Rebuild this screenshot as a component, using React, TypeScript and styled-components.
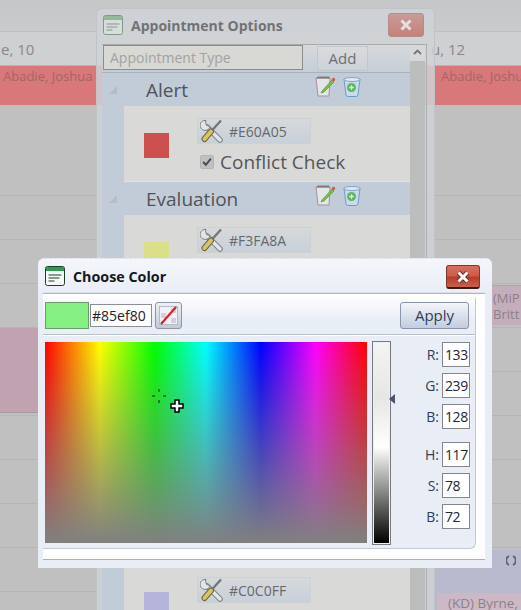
import styled, { createGlobalStyle } from "styled-components";

const GlobalStyle = createGlobalStyle`
    html, body {
        margin: 0;
        padding: 0;
        background: #c0c0c0;
    }
    * {
        box-sizing: border-box;
    }
`;

const Desktop = styled.div`
    position: relative;
    width: 521px;
    height: 610px;
    overflow: hidden;
    background: #c0c0c0;
    font-family: "Open Sans", "Noto Sans", sans-serif;
`;

/* the dimmed calendar behind the windows */
const TopBand = styled.div`
    height: 32px;
    background: linear-gradient(#c5c6c8, #cacbcd);
    border-bottom: 1px solid #bfc0c2;
`;
const DayRow = styled.div`
    display: grid;
    grid-template-columns: 96px 1fr 91px;
    height: 33px;
    align-items: center;
    font-size: 15px;
    color: #87888a;
    background: #cfd0d2;
`;
const DayCell = styled.div<{ $center?: boolean }>`
    padding-left: 1px;
    text-align: ${(p) => (p.$center ? "center" : "left")};
    padding-right: ${(p) => (p.$center ? "90px" : "0")};
`;
const AlertBar = styled.div`
    height: 40px;
    background: #d9787a;
    border-top: 1px solid #8fc6c4;
    display: flex;
    justify-content: space-between;
    font-size: 13px;
    color: #a26668;
    padding: 1px 0 0 3px;
    white-space: nowrap;
    overflow: hidden;
`;
const AlertName = styled.span<{ $right?: boolean }>`
    width: ${(p) => (p.$right ? "80px" : "auto")};
    overflow: hidden;
`;
const CalendarBody = styled.div`
    display: flex;
    justify-content: space-between;
    height: 505px;
    background: repeating-linear-gradient(#b5b5b5 0 1px, transparent 1px 44px) 0 90px / 100% 100% no-repeat;
`;
const LeftColumn = styled.div`
    width: 40px;
    padding-top: 223px;
`;
const PinkEvent = styled.div`
    height: 85px;
    background: #c0a2b0;
    border-bottom: 1px solid #a89aa0;
`;
const RightColumn = styled.div`
    width: 93px;
    display: flex;
    flex-direction: column;
    align-items: flex-end;
    justify-content: space-between;
    padding-top: 180px;
`;
const MipEvent = styled.div`
    width: 29px;
    height: 40px;
    overflow: hidden;
    background: #c5aebb;
    border-top: 1px solid #b0a5ac;
    color: #8d7f88;
    font-size: 13px;
    line-height: 16px;
    padding: 4px 0 0 1px;
    white-space: nowrap;
`;
const LilacEvent = styled.div`
    width: 93px;
    height: 60px;
    background: #b9bacd;
    display: flex;
    flex-direction: column;
    justify-content: flex-end;
    padding-left: 9px;
    position: relative;
`;
const ByrneEvent = styled.div`
    height: 17px;
    background: #cdb9c6;
    color: #8a8189;
    font-size: 13.5px;
    line-height: 20px;
    padding-left: 11px;
    white-space: nowrap;
    overflow: hidden;
`;
const SyncMark = styled.svg`
    position: absolute;
    right: 5px;
    top: 5px;
`;

/* dimmed options window */
const OptionsWindow = styled.div`
    position: absolute;
    left: 96px;
    top: 8px;
    width: 339px;
    height: 620px;
    border: 1px solid #c2c3c6;
    border-radius: 6px 6px 0 0;
    background: rgba(208, 211, 215, 0.82);
    padding: 0 7px 0 5px;
`;
const OptionsTitleBar = styled.div`
    display: flex;
    align-items: center;
    height: 36px;
    padding: 0 0 4px 1px;
    gap: 8px;
`;
const OptionsTitle = styled.div`
    flex: 1;
    font-size: 14px;
    font-weight: 700;
    color: #717275;
`;
const FadedClose = styled.div`
    width: 36px;
    height: 24px;
    margin-right: 3px;
    border: 1px solid #b98b87;
    border-radius: 3px;
    background: linear-gradient(#c99c98, #c5817a);
    display: flex;
    align-items: center;
    justify-content: center;
`;
const OptionsBody = styled.div`
    display: flex;
    border-right: 1px solid #aeafb1;
    box-shadow: 0 -1px 0 #a9aaac;
`;
const OptionsList = styled.div`
    width: 308px;
`;
const AddRow = styled.div`
    display: flex;
    align-items: flex-start;
    height: 28px;
    gap: 14px;
    background: linear-gradient(#d7d9db, #c5ced8);
    border-bottom: 1px solid #a8b2bd;
`;
const TypeInput = styled.div`
    width: 200px;
    height: 25px;
    margin-left: 1px;
    border: 1px solid #8b8c8c;
    background: #d8d8d4;
    color: #a1a2a2;
    font-size: 14px;
    line-height: 23px;
    padding-left: 6px;
`;
const AddButton = styled.div`
    width: 51px;
    height: 25px;
    margin-top: 1px;
    border: 1px solid #c2c7cd;
    background: linear-gradient(#d9dbdd, #cbd3da);
    color: #6e6f73;
    text-align: center;
    font-size: 15px;
    line-height: 23px;
`;
const GroupHeader = styled.div`
    display: flex;
    align-items: center;
    height: 33px;
    background: #c2ccd8;
    color: #515357;
    font-size: 19px;
`;
const Expander = styled.div`
    width: 44px;
    padding-left: 7px;
    display: flex;
`;
const GroupName = styled.div`
    flex: 1;
`;
const HeaderIcons = styled.div`
    display: flex;
    gap: 6px;
    margin: -6px 48px 0 0;
`;
const GroupBody = styled.div<{ $height: number }>`
    display: flex;
    height: ${(p) => p.$height}px;
    margin-left: 22px;
    background: #d9d9d7;
    border-bottom: 1px solid #e3e3e2;
    box-shadow: -22px 0 0 #c2ccd8;
`;
const SwatchArea = styled.div`
    width: 73px;
    padding: 27px 0 0 20px;
`;
const Swatch = styled.div<{ $color: string }>`
    width: 25px;
    height: 25px;
    background: ${(p) => p.$color};
`;
const GroupControls = styled.div`
    padding-top: 12px;
    display: flex;
    flex-direction: column;
    gap: 5px;
`;
const ColorButton = styled.div`
    display: flex;
    align-items: center;
    width: 114px;
    height: 26px;
    padding-left: 2px;
    gap: 6px;
    border: 1px solid #cdd1d5;
    background: linear-gradient(#d6d9dc, #c8d0d9);
    color: #66686c;
    font-size: 14px;
`;
const CheckRow = styled.div`
    display: flex;
    align-items: center;
    gap: 6px;
    padding-left: 3px;
    color: #55565a;
    font-size: 19px;
`;
const CheckBox = styled.div`
    width: 14px;
    height: 14px;
    border: 1px solid #b3b4b6;
    border-radius: 2px;
    background: #bfc0c2;
    display: flex;
    align-items: center;
    justify-content: center;
`;
const ScrollTrack = styled.div`
    width: 15px;
    height: 580px;
    background: linear-gradient(#d7d8d9 0 16px, #bcbebd 16px);
    color: #77787a;
    display: flex;
    justify-content: center;
    padding-top: 4px;
`;

/* colour dialog */
const ColorDialog = styled.div`
    position: absolute;
    left: 38px;
    top: 258px;
    width: 454px;
    height: 310px;
    display: flex;
    flex-direction: column;
    border-radius: 6px 6px 0 0;
    border-top: 1px dashed #dfe3ea;
    background: linear-gradient(#f4f6fb, #e9edf6 36px);
    padding: 0 7px 8px 5px;
`;
const DialogTitleBar = styled.div`
    display: flex;
    align-items: center;
    height: 34px;
    padding-left: 2px;
    gap: 8px;
`;
const DialogTitle = styled.div`
    flex: 1;
    font-size: 14.300px;
    font-weight: 700;
    color: #16181c;
`;
const CloseButton = styled.div`
    width: 34px;
    height: 24px;
    margin: 2px 5px 0 0;
    border: 1px solid #7c3a2c;
    border-bottom: 2px solid #2c2020;
    border-radius: 3px;
    background: linear-gradient(#d9705f 0, #cf5a47 48%, #b83c28 52%, #c9604c 100%);
    display: flex;
    align-items: center;
    justify-content: center;
`;
const OuterPanel = styled.div`
    flex: 1;
    background: #fff;
    border-top: 1px solid #aeb6c4;
    border-bottom: 1px solid #a8b0c0;
    box-shadow: 0 -1px 0 #dce1ea;
    padding: 0 9px 10px 0;
    display: flex;
`;
const InnerPanel = styled.div`
    flex: 1;
    background: #e9edf6;
    border-radius: 0 6px 6px 0;
    border-right: 1px solid #c3c9d6;
    border-bottom: 1px solid #c3c9d6;
    display: flex;
    flex-direction: column;
`;
const ColorToolbar = styled.div`
    display: flex;
    align-items: center;
    height: 41px;
    padding: 3px 6px 0 2px;
    border-bottom: 1px solid #b9c0cc;
    box-shadow: 0 1px 0 #fff;
    background: linear-gradient(#fff, #e9edf6 70%);
`;
const CurrentColor = styled.div`
    width: 44px;
    height: 27px;
    background: #85ef80;
    border: 1px solid #6c9c6c;
`;
const HexInput = styled.div`
    width: 62px;
    height: 23px;
    margin: 0 3px 0 1px;
    background: #fff;
    border: 1px solid #8d8f94;
    color: #222;
    font-size: 14px;
    line-height: 21px;
    padding-left: 1px;
`;
const NoColorButton = styled.div`
    width: 27px;
    height: 27px;
    border: 1px solid #8e96a6;
    border-radius: 3px;
    background: linear-gradient(#eef0f5, #c3cad8);
    display: flex;
    align-items: center;
    justify-content: center;
`;
const ApplyButton = styled.div`
    margin-left: auto;
    width: 69px;
    height: 27px;
    border: 1px solid #8a95ab;
    border-radius: 3px;
    background: linear-gradient(#f3f5f9, #c3cddf);
    color: #2f3e5c;
    font-size: 15px;
    line-height: 25px;
    text-align: center;
`;
const PickerRow = styled.div`
    display: flex;
    align-items: flex-start;
    padding: 6px 0 0 2px;
`;
const Spectrum = styled.div`
    position: relative;
    width: 322px;
    height: 201px;
    margin-top: 1px;
    background:
        linear-gradient(rgba(128, 128, 128, 0), #808080),
        linear-gradient(
            90deg,
            #ff0000 0%,
            #ffff00 17%,
            #00ff00 34%,
            #00ffff 50%,
            #0000ff 67%,
            #ff00ff 84%,
            #ff0000 100%
        );
`;
const CursorMark = styled.svg`
    position: absolute;
    left: 104px;
    top: 44px;
`;
const BrightnessWrap = styled.div`
    position: relative;
    margin-left: 5px;
`;
const BrightnessBar = styled.div`
    width: 19px;
    height: 204px;
    border: 2px solid #eef0f5;
    outline: 1px solid #77797e;
    outline-offset: -1px;
    background: linear-gradient(#f4f4f4, #e6e6e6 27%, #fff 52%, #000 100%);
`;
const LevelArrow = styled.div`
    position: absolute;
    left: 17px;
    top: 53px;
    width: 0;
    height: 0;
    border-top: 5px solid transparent;
    border-bottom: 5px solid transparent;
    border-right: 6px solid #4b5570;
`;
const ValueColumn = styled.div`
    margin-left: auto;
    margin-right: 5px;
    padding-top: 1px;
    display: flex;
    flex-direction: column;
`;
const ValueRow = styled.div<{ $gap?: number }>`
    display: flex;
    align-items: center;
    justify-content: flex-end;
    gap: 3px;
    height: 25px;
    margin-bottom: ${(p) => p.$gap ?? 6}px;
    color: #2e3e55;
    font-size: 14px;
`;
const ValueBox = styled.div`
    width: 28px;
    height: 25px;
    background: #fff;
    border: 1px solid #85878c;
    color: #22263a;
    font-size: 14px;
    letter-spacing: -0.4px;
    line-height: 23px;
    padding-left: 2px;
`;

function WindowIcon({ faded }: { faded?: boolean }) {
    const stroke = faded ? "#7f9a85" : "#1d3d2c";
    const band = faded ? "#93b89a" : "#2f9a52";
    return (
        <svg width="20" height="20" viewBox="0 0 20 20">
            <rect x="0.5" y="0.5" width="19" height="19" rx="2" fill={faded ? "#d8dcdc" : "#f7f9f7"} stroke={stroke} />
            <rect x="1" y="1" width="18" height="4" fill={band} />
            <path d="M3.5 9h13M3.5 12h11M3.5 15h6" stroke={stroke} strokeWidth="1.2" />
        </svg>
    );
}

function CrossGlyph({ stroke, outline }: { stroke: string; outline?: string }) {
    return (
        <svg width="14" height="14" viewBox="0 0 14 14">
            {outline && <path d="M2.5 2.5l9 9M11.5 2.5l-9 9" stroke={outline} strokeWidth="5" />}
            <path d="M2.5 2.5l9 9M11.5 2.5l-9 9" stroke={stroke} strokeWidth="3" />
        </svg>
    );
}

function ToolsIcon() {
    return (
        <svg width="23" height="24" viewBox="0 0 23 24">
            <path d="M7 8l13 13" stroke="#7c8184" strokeWidth="5.500" strokeLinecap="round" />
            <path d="M7 8l13 13" stroke="#e4e6e6" strokeWidth="3.500" strokeLinecap="round" />
            <path d="M6 1.500a5 5 0 1 0 4 6L6.500 6.500 5.500 3z" fill="#e4e6e6" stroke="#7c8184" />
            <path d="M21 1.500L10.500 13" stroke="#73777a" strokeWidth="2.400" />
            <path d="M11 12.500L4.500 20" stroke="#6e6836" strokeWidth="6" strokeLinecap="round" />
            <path d="M11 12.500L4.500 20" stroke="#d6c36a" strokeWidth="4" strokeLinecap="round" />
        </svg>
    );
}

function EditIcon() {
    return (
        <svg width="21" height="21" viewBox="0 0 21 21">
            <path d="M1 2h14l-1 18H3z" fill="#e4e5e6" stroke="#a78fa0" />
            <path d="M1 2.500L3 .5h11l1 2z" fill="#7f7b7d" />
            <path d="M7 15l10-11 2 2-10 10-3 1z" fill="#79bf48" stroke="#54863a" strokeWidth="0.6" />
            <circle cx="18.500" cy="3.500" r="1.700" fill="#c9604f" />
        </svg>
    );
}

function BinIcon() {
    return (
        <svg width="20" height="21" viewBox="0 0 20 21">
            <path d="M2 3h16l-2 16a2 2 0 0 1-2 1.500H6A2 2 0 0 1 4 19z" fill="#c9dcec" stroke="#6e9cc8" />
            <ellipse cx="10" cy="3.500" rx="8" ry="2" fill="#e2e8ec" stroke="#7fa4c8" />
            <circle cx="9.500" cy="11.500" r="4.500" fill="#5fb65e" />
            <path d="M9.500 9.300v4.400M7.300 11.500h4.400" stroke="#e6f2e4" strokeWidth="1.300" />
        </svg>
    );
}

function NoColorIcon() {
    return (
        <svg width="21" height="21" viewBox="0 0 21 21">
            <rect x="1.500" y="1.500" width="18" height="18" fill="#f1f2f5" stroke="#b6bac4" />
            <path d="M3 8h5v5H3zM13 3h5v5h-5zM13 13h5v5h-5z" fill="#cfd2d8" />
            <path d="M3 19L18 2" stroke="#d8222a" strokeWidth="2.200" />
        </svg>
    );
}

function ColorGroup({
    name,
    hex,
    swatch,
    bodyHeight,
    conflict,
}: {
    name: string;
    hex: string;
    swatch: string;
    bodyHeight: number;
    conflict?: boolean;
}) {
    return (
        <>
            <GroupHeader>
                <Expander>
                    <svg width="8" height="8" viewBox="0 0 8 8">
                        <path d="M8 0v8H0z" fill="#b4bcc6" />
                    </svg>
                </Expander>
                <GroupName>{name}</GroupName>
                {name && (
                    <HeaderIcons>
                        <EditIcon />
                        <BinIcon />
                    </HeaderIcons>
                )}
            </GroupHeader>
            <GroupBody $height={bodyHeight}>
                <SwatchArea>
                    <Swatch $color={swatch} />
                </SwatchArea>
                <GroupControls>
                    <ColorButton>
                        <ToolsIcon />
                        {hex}
                    </ColorButton>
                    {conflict && (
                        <CheckRow>
                            <CheckBox>
                                <svg width="10" height="10" viewBox="0 0 9 9">
                                    <path d="M1 4.500l2.500 2.500L8 1.500" stroke="#4a4b4d" strokeWidth="1.800" fill="none" />
                                </svg>
                            </CheckBox>
                            Conflict Check
                        </CheckRow>
                    )}
                </GroupControls>
            </GroupBody>
        </>
    );
}

const rgbValues = [
    { label: "R:", value: "133" },
    { label: "G:", value: "239" },
    { label: "B:", value: "128" },
];
const hsbValues = [
    { label: "H:", value: "117" },
    { label: "S:", value: "78" },
    { label: "B:", value: "72" },
];

export default function App() {
    return (
        <Desktop>
            <GlobalStyle />
            <TopBand />
            <DayRow>
                <DayCell>e, 10</DayCell>
                <DayCell $center>Wed, 11</DayCell>
                <DayCell>u, 12</DayCell>
            </DayRow>
            <AlertBar>
                <AlertName>Abadie, Joshua</AlertName>
                <AlertName $right>Abadie, Joshua</AlertName>
            </AlertBar>
            <CalendarBody>
                <LeftColumn>
                    <PinkEvent />
                </LeftColumn>
                <RightColumn>
                    <MipEvent>
                        (MiP
                        <br />
                        Britt
                    </MipEvent>
                    <LilacEvent>
                        <SyncMark width="10" height="11" viewBox="0 0 10 11">
                            <path d="M3 1a5 5 0 0 0 0 9M7 1a5 5 0 0 1 0 9" stroke="#5f6068" strokeWidth="1.800" fill="none" />
                        </SyncMark>
                        <ByrneEvent>(KD) Byrne,</ByrneEvent>
                    </LilacEvent>
                </RightColumn>
            </CalendarBody>

            <OptionsWindow>
                <OptionsTitleBar>
                    <WindowIcon faded />
                    <OptionsTitle>Appointment Options</OptionsTitle>
                    <FadedClose>
                        <CrossGlyph stroke="#e6e0de" />
                    </FadedClose>
                </OptionsTitleBar>
                <OptionsBody>
                    <OptionsList>
                        <AddRow>
                            <TypeInput>Appointment Type</TypeInput>
                            <AddButton>Add</AddButton>
                        </AddRow>
                        <ColorGroup name="Alert" hex="#E60A05" swatch="#cc5050" bodyHeight={76} conflict />
                        <ColorGroup name="Evaluation" hex="#F3FA8A" swatch="#dcdf8a" bodyHeight={317} />
                        <ColorGroup name="" hex="#C0C0FF" swatch="#b5b5dc" bodyHeight={80} />
                    </OptionsList>
                    <ScrollTrack>
                        <svg width="9" height="6" viewBox="0 0 9 6">
                            <path d="M1 5l3.500-3.500L8 5" stroke="#77787a" strokeWidth="1.800" fill="none" />
                        </svg>
                    </ScrollTrack>
                </OptionsBody>
            </OptionsWindow>

            <ColorDialog>
                <DialogTitleBar>
                    <WindowIcon />
                    <DialogTitle>Choose Color</DialogTitle>
                    <CloseButton>
                        <CrossGlyph stroke="#fff" outline="#6b2a1e" />
                    </CloseButton>
                </DialogTitleBar>
                <OuterPanel>
                    <InnerPanel>
                        <ColorToolbar>
                            <CurrentColor />
                            <HexInput>#85ef80</HexInput>
                            <NoColorButton>
                                <NoColorIcon />
                            </NoColorButton>
                            <ApplyButton>Apply</ApplyButton>
                        </ColorToolbar>
                        <PickerRow>
                            <Spectrum>
                                <CursorMark width="50" height="40" viewBox="0 0 50 40">
                                    <path
                                        d="M10 3v3M10 14v3M3 10h3M14 10h3"
                                        stroke="#1c5a1c"
                                        strokeWidth="1.500"
                                    />
                                    <path
                                        d="M26 14h4v4h4v4h-4v4h-4v-4h-4v-4h4z"
                                        fill="#fff"
                                        stroke="#000"
                                        strokeWidth="1.500"
                                    />
                                </CursorMark>
                            </Spectrum>
                            <BrightnessWrap>
                                <BrightnessBar />
                                <LevelArrow />
                            </BrightnessWrap>
                            <ValueColumn>
                                {rgbValues.map((v, i) => (
                                    <ValueRow key={v.label} $gap={i === 2 ? 13 : 6}>
                                        {v.label}
                                        <ValueBox>{v.value}</ValueBox>
                                    </ValueRow>
                                ))}
                                {hsbValues.map((v) => (
                                    <ValueRow key={v.label}>
                                        {v.label}
                                        <ValueBox>{v.value}</ValueBox>
                                    </ValueRow>
                                ))}
                            </ValueColumn>
                        </PickerRow>
                    </InnerPanel>
                </OuterPanel>
            </ColorDialog>
        </Desktop>
    );
}
